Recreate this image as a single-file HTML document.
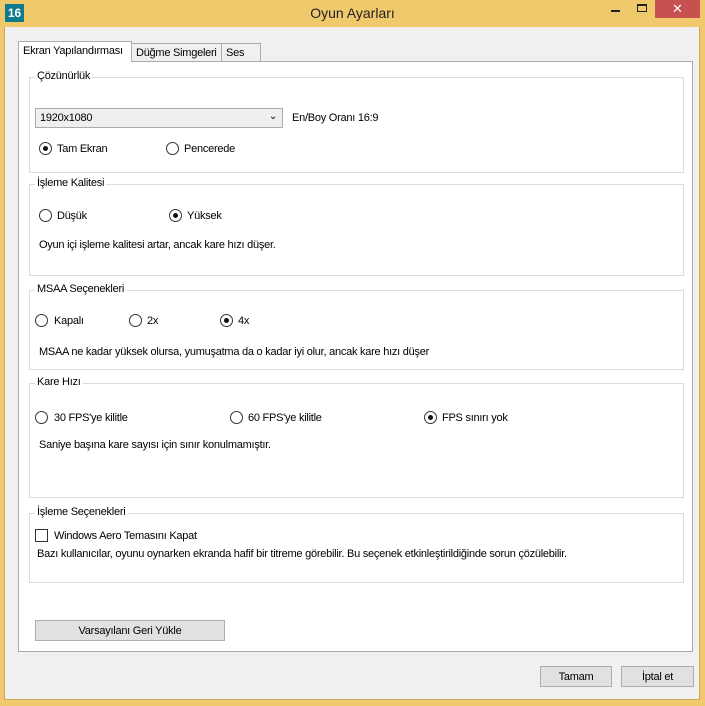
<!DOCTYPE html>
<html><head><meta charset="utf-8"><style>
*{margin:0;padding:0;box-sizing:border-box}
body{width:705px;height:706px;background:#f0c96c;font-family:"Liberation Sans",sans-serif;font-size:11px;letter-spacing:-0.25px;color:#000;position:relative;overflow:hidden}
.a{position:absolute;white-space:nowrap}
.client{position:absolute;left:4px;top:27px;width:696px;height:673px;background:#f0f0f0;border:1px solid #c9a757;border-top:none}
.panel{position:absolute;left:18px;top:61px;width:675px;height:591px;background:#fff;border:1px solid #a9a9a9}
.g{position:absolute;left:29px;width:655px;border:1px solid #dcdcdc}
.gl{position:absolute;background:#fff;padding:0 2px;left:5px;top:-8px}
.r{position:absolute;width:13px;height:13px;border:1px solid #333;border-radius:50%;background:#fff}
.r.on::after{content:"";position:absolute;left:3px;top:3px;width:5px;height:5px;border-radius:50%;background:#111}
.btn{position:absolute;background:#e1e1e1;border:1px solid #adadad;text-align:center;line-height:20px}
.tab{position:absolute;border:1px solid #acacac;border-bottom:none;background:#f0f0f0;padding-left:4px;line-height:18px}
</style></head><body>
<div class="a" style="left:5px;top:4px;width:19px;height:18px;background:#0f7a8c;color:#fff;font-weight:bold;font-size:12px;text-align:center;line-height:18px;letter-spacing:0">16</div>
<div class="a" style="left:0;width:705px;top:5px;text-align:center;font-size:14px;letter-spacing:0;color:#222">Oyun Ayarları</div>
<div class="a" style="left:611px;top:10px;width:9px;height:2px;background:#222"></div>
<div class="a" style="left:637px;top:4px;width:10px;height:8px;border:1px solid #222;border-top-width:2px"></div>
<div class="a" style="left:655px;top:0;width:45px;height:18px;background:#c75050;color:#fff;text-align:center;font-size:13px;line-height:17px;letter-spacing:0">✕</div>
<div class="client"></div>
<div class="panel"></div>
<div class="tab" style="left:18px;top:41px;width:114px;height:21px;background:#fff;z-index:2">Ekran Yapılandırması</div>
<div class="tab" style="left:131px;top:43px;width:91px;height:18px">Düğme Simgeleri</div>
<div class="tab" style="left:221px;top:43px;width:40px;height:18px">Ses</div>

<div class="g" style="top:77px;height:96px"><span class="gl">Çözünürlük</span></div>
<div class="a" style="left:35px;top:108px;width:248px;height:20px;border:1px solid #acacac;background:#efefef;padding:3px 4px">1920x1080<span style="position:absolute;right:5px;top:2px;font-size:10px">&#8964;</span></div>
<div class="a" style="left:292px;top:112px">En/Boy Oranı 16:9</div>
<div class="r on" style="left:39px;top:142px"></div><div class="a" style="left:57px;top:143px">Tam Ekran</div>
<div class="r" style="left:166px;top:142px"></div><div class="a" style="left:184px;top:143px">Pencerede</div>

<div class="g" style="top:184px;height:92px"><span class="gl">İşleme Kalitesi</span></div>
<div class="r" style="left:39px;top:209px"></div><div class="a" style="left:57px;top:210px">Düşük</div>
<div class="r on" style="left:169px;top:209px"></div><div class="a" style="left:187px;top:210px">Yüksek</div>
<div class="a" style="left:39px;top:239px">Oyun içi işleme kalitesi artar, ancak kare hızı düşer.</div>

<div class="g" style="top:290px;height:80px"><span class="gl">MSAA Seçenekleri</span></div>
<div class="r" style="left:35px;top:314px"></div><div class="a" style="left:54px;top:315px">Kapalı</div>
<div class="r" style="left:129px;top:314px"></div><div class="a" style="left:147px;top:315px">2x</div>
<div class="r on" style="left:220px;top:314px"></div><div class="a" style="left:238px;top:315px">4x</div>
<div class="a" style="left:39px;top:346px">MSAA ne kadar yüksek olursa, yumuşatma da o kadar iyi olur, ancak kare hızı düşer</div>

<div class="g" style="top:383px;height:115px"><span class="gl">Kare Hızı</span></div>
<div class="r" style="left:35px;top:411px"></div><div class="a" style="left:54px;top:412px">30 FPS'ye kilitle</div>
<div class="r" style="left:230px;top:411px"></div><div class="a" style="left:248px;top:412px">60 FPS'ye kilitle</div>
<div class="r on" style="left:424px;top:411px"></div><div class="a" style="left:442px;top:412px">FPS sınırı yok</div>
<div class="a" style="left:39px;top:439px">Saniye başına kare sayısı için sınır konulmamıştır.</div>

<div class="g" style="top:513px;height:70px"><span class="gl">İşleme Seçenekleri</span></div>
<div class="a" style="left:35px;top:529px;width:13px;height:13px;border:1px solid #333;background:#fff"></div>
<div class="a" style="left:54px;top:530px">Windows Aero Temasını Kapat</div>
<div class="a" style="left:37px;top:548px">Bazı kullanıcılar, oyunu oynarken ekranda hafif bir titreme görebilir. Bu seçenek etkinleştirildiğinde sorun çözülebilir.</div>

<div class="btn" style="left:35px;top:620px;width:190px;height:21px">Varsayılanı Geri Yükle</div>
<div class="btn" style="left:540px;top:666px;width:72px;height:21px">Tamam</div>
<div class="btn" style="left:621px;top:666px;width:73px;height:21px">İptal et</div>
</body></html>
